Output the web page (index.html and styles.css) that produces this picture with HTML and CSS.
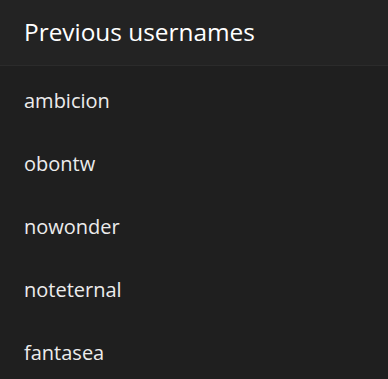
FILE: index.html
```html
<!DOCTYPE html>
<html>
<head>
<meta charset="utf-8">
<link rel="stylesheet" href="styles.css">
</head>
<body>
<div class="panel">
  <div class="header"><h1 class="title">Previous usernames</h1></div>
  <ul class="list">
    <li class="item">ambicion</li>
    <li class="item">obontw</li>
    <li class="item">nowonder</li>
    <li class="item">noteternal</li>
    <li class="item">fantasea</li>
  </ul>
</div>
</body>
</html>
```
FILE: styles.css
```css
html, body {
  margin: 0;
  padding: 0;
  background: #1f1f1f;
}
body {
  font-family: "Open Sans", "Noto Sans", sans-serif;
  color: #ffffff;
}
.panel {
  width: 388px;
  height: 379px;
  background: #1f1f1f;
  overflow: hidden;
}
.header {
  height: 66px;
  background: #232323;
  border-bottom: 1px solid #2b2b2b;
  display: flex;
  align-items: center;
  padding: 0 24px;
  box-sizing: border-box;
}
.title {
  margin: 0;
  font-size: 24.4px;
  font-weight: 400;
  line-height: 1;
  color: #ffffff;
}
.list {
  list-style: none;
  margin: 0;
  padding: 3px 0 0 0;
}
.item {
  height: 63px;
  display: flex;
  align-items: center;
  padding: 0 24px;
  font-size: 20px;
  color: #ececec;
}
```
